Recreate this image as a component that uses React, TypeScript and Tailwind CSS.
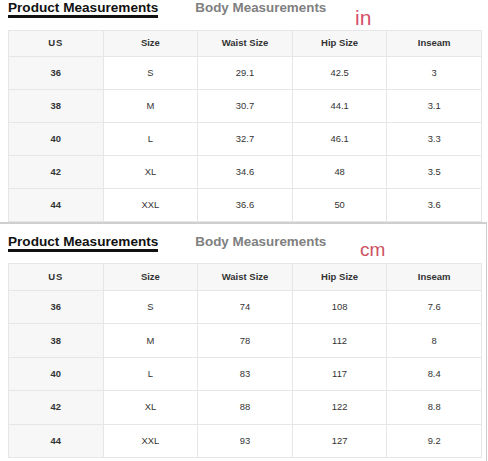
import React from "react";

const headers = ["US", "Size", "Waist Size", "Hip Size", "Inseam"];
const inRows = [
  ["36", "S", "29.1", "42.5", "3"],
  ["38", "M", "30.7", "44.1", "3.1"],
  ["40", "L", "32.7", "46.1", "3.3"],
  ["42", "XL", "34.6", "48", "3.5"],
  ["44", "XXL", "36.6", "50", "3.6"],
];
const cmRows = [
  ["36", "S", "74", "108", "7.6"],
  ["38", "M", "78", "112", "8"],
  ["40", "L", "83", "117", "8.4"],
  ["42", "XL", "88", "122", "8.8"],
  ["44", "XXL", "93", "127", "9.2"],
];

function Tabs({ unit, unitClass }: { unit: string; unitClass: string }) {
  return (
    <div className="relative flex items-start h-[18px]">
      <div className="ml-[8px] pt-[1px] leading-[14px] text-[13.6px] font-bold text-[#111] border-b-[3px] border-[#111] whitespace-nowrap">
        Product Measurements
      </div>
      <div className="ml-[37px] pt-[1px] leading-[14px] text-[13.4px] font-bold text-[#808080] whitespace-nowrap">
        Body Measurements
      </div>
      <span className={unitClass}>{unit}</span>
    </div>
  );
}

function Table({
  rows,
  headH,
  rowH,
}: {
  rows: string[][];
  headH: string;
  rowH: string;
}) {
  return (
    <div className="ml-[8px] w-[474px] border-l border-t border-[#e6e6e6]">
      <div className="grid grid-cols-5">
        {headers.map((h) => (
          <div
            key={h}
            className={`${headH} flex items-center justify-center bg-[#f7f7f7] border-r border-b border-[#e6e6e6] text-[9.5px] font-bold text-[#333]`}
          >
            {h === "US" ? <span className="tracking-[1px]">US</span> : h}
          </div>
        ))}
        {rows.map((r) =>
          r.map((c, i) => (
            <div
              key={r[0] + "-" + i}
              className={`${rowH} flex items-center justify-center border-r border-b border-[#e6e6e6] text-[9.4px] text-[#333] ${
                i === 0 ? "bg-[#f7f7f7] font-bold" : "bg-white"
              }`}
            >
              {c}
            </div>
          ))
        )}
      </div>
    </div>
  );
}

export default function App() {
  return (
    <div
      className="w-[488px] h-[461px] overflow-hidden bg-white flex flex-col"
      style={{ fontFamily: '"Liberation Sans", Arial, sans-serif' }}
    >
      <div className="h-[222px] overflow-hidden shrink-0">
        <Tabs
          unit="in"
          unitClass="absolute left-[355px] top-[8px] text-[21px] leading-[20px] text-[#d4506a]"
        />
        <div className="mt-[12px]">
          <Table rows={inRows} headH="h-[26px]" rowH="h-[33px]" />
        </div>
      </div>
      <div className="flex-1 w-[487px] border-t-2 border-r border-t-[#cfcfcf] border-r-[#cccccc] pt-[10px]">
        <Tabs
          unit="cm"
          unitClass="absolute left-[360px] top-[6px] text-[19px] leading-[19px] text-[#cc5263]"
        />
        <div className="mt-[11px]">
          <Table rows={cmRows} headH="h-[27px]" rowH="h-[33.4px]" />
        </div>
      </div>
    </div>
  );
}
